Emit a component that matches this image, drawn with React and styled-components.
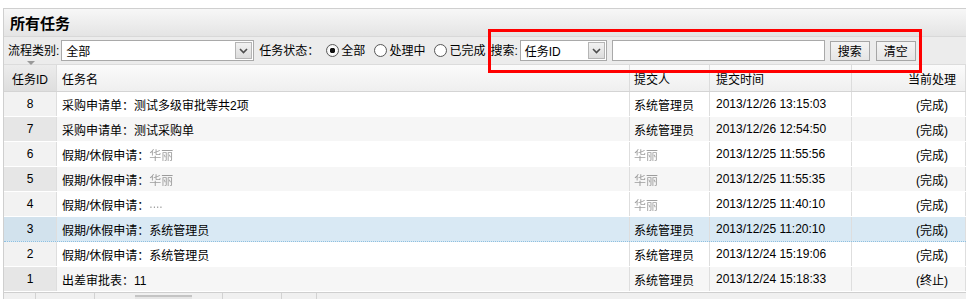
import styled, { createGlobalStyle } from "styled-components";

const GlobalStyle = createGlobalStyle`
  html, body {
    margin: 0;
    padding: 0;
    background: #fff;
    overflow: hidden;
  }
  body {
    font-family: "Liberation Sans", "Noto Sans CJK SC", sans-serif;
    font-size: 12px;
    color: #000;
  }
  * { box-sizing: border-box; }
`;

const rows = [
  { id: 8, name: "采购申请单：测试多级审批等共2项", user: "系统管理员", time: "2013/12/26 13:15:03", state: "(完成)" },
  { id: 7, name: "采购申请单：测试采购单", user: "系统管理员", time: "2013/12/26 12:54:50", state: "(完成)" },
  { id: 6, name: "假期/休假申请：", mask: "华丽", user: null, time: "2013/12/25 11:55:56", state: "(完成)" },
  { id: 5, name: "假期/休假申请：", mask: "华丽", user: null, time: "2013/12/25 11:55:35", state: "(完成)" },
  { id: 4, name: "假期/休假申请：", mask: "....", user: null, time: "2013/12/25 11:40:10", state: "(完成)" },
  { id: 3, name: "假期/休假申请：系统管理员", user: "系统管理员", time: "2013/12/25 11:20:10", state: "(完成)", selected: true },
  { id: 2, name: "假期/休假申请：系统管理员", user: "系统管理员", time: "2013/12/24 15:19:06", state: "(完成)" },
  { id: 1, name: "出差审批表：11", user: "系统管理员", time: "2013/12/24 15:18:33", state: "(终止)" },
];

const App = () => {
  return (
    <>
      <GlobalStyle />
      <Page>
        <Panel>
          <TitleBar>所有任务</TitleBar>
          <Toolbar>
            <Label $ml={4}>流程类别:</Label>
            <Select $w={193} $ml={2}>
              <SelectText>全部</SelectText>
              <SelectArrow><Chevron /></SelectArrow>
            </Select>
            <Label $ml={5}>任务状态：</Label>
            <Radio $checked $ml={7} />
            <Label $ml={2}>全部</Label>
            <Radio $ml={9} />
            <Label $ml={2}>处理中</Label>
            <Radio $ml={9} />
            <Label $ml={2}>已完成</Label>
            <Label $ml={5}>搜索:</Label>
            <Select $w={87} $ml={2}>
              <SelectText>任务ID</SelectText>
              <SelectArrow><Chevron /></SelectArrow>
            </Select>
            <SearchInput />
            <Button $ml={5}>搜索</Button>
            <Button $ml={6}>清空</Button>
          </Toolbar>
          <HeaderRow>
            <HeadCell $center $sorted>
              <SortArrow />
              任务ID
            </HeadCell>
            <HeadCell>任务名</HeadCell>
            <HeadCell $pl={4}>提交人</HeadCell>
            <HeadCell $pl={6}>提交时间</HeadCell>
            <HeadCell $right>当前处理</HeadCell>
          </HeaderRow>
          {rows.map((r, i) => (
            <Row key={r.id} $odd={i % 2 === 1} $selected={r.selected}>
              <IdCell $odd={i % 2 === 1} $selected={r.selected}>{r.id}</IdCell>
              <Cell>
                {r.name}
                {r.mask && <Masked>{r.mask}</Masked>}
              </Cell>
              <Cell $pl={4}>{r.user ? r.user : <Masked>华丽</Masked>}</Cell>
              <Cell $pl={6}>{r.time}</Cell>
              <Cell $right>{r.state}</Cell>
            </Row>
          ))}
          <Pager>
            <PagerGroup $w={32} />
            <PagerGroup $w={59} />
            <PagerGroup $w={128} $pl={40}>
              <PagerBox />
            </PagerGroup>
            <PagerGroup $w={59} />
            <PagerGroup $w={35} />
          </Pager>
          <Highlight />
        </Panel>
      </Page>
    </>
  );
};

const Chevron = () => (
  <svg width="9" height="6" viewBox="0 0 9 6">
    <path d="M1 1 L4.5 4.5 L8 1" fill="none" stroke="#4d4d4d" strokeWidth="1.6" />
  </svg>
);

export default App;

const Page = styled.div`
  padding: 8px 0 0 3px;
`;

const Panel = styled.div`
  position: relative;
  border-top: 1px solid #cfcfcf;
  border-left: 1px solid #cfcfcf;
  width: 963px;
`;

const TitleBar = styled.div`
  height: 28px;
  display: flex;
  align-items: center;
  padding-left: 6px;
  font-size: 15px;
  font-weight: 700;
  background: linear-gradient(#f7f7f7, #e4e4e4);
  border-bottom: 1px solid #d8d8d8;
`;

const Toolbar = styled.div`
  height: 28px;
  display: flex;
  align-items: center;
  background: #ececec;
  border-bottom: 1px solid #dcdcdc;
`;

const Label = styled.span`
  margin-left: ${(p) => p.$ml || 0}px;
  white-space: nowrap;
  line-height: 1;
`;

const Select = styled.div`
  width: ${(p) => p.$w}px;
  height: 21px;
  margin-left: ${(p) => p.$ml || 0}px;
  display: flex;
  align-items: stretch;
  border: 1px solid #a9a9a9;
  background: #fff;
`;

const SelectText = styled.span`
  flex: 1;
  display: flex;
  align-items: center;
  padding-left: 4px;
`;

const SelectArrow = styled.span`
  width: 17px;
  margin: 1px;
  display: flex;
  align-items: center;
  justify-content: center;
  background: linear-gradient(#f2f2f2, #dcdcdc);
  border: 1px solid #b5b5b5;
`;

const Radio = styled.span`
  width: 13px;
  height: 13px;
  margin-left: ${(p) => p.$ml || 0}px;
  border-radius: 50%;
  border: 1px solid #5a5a5a;
  background: radial-gradient(circle, ${(p) => (p.$checked ? "#111 0 2.6px, #fff 3px" : "#fff 0, #fff 60%")}, #e2e2e2);
  flex-shrink: 0;
`;

const SearchInput = styled.div`
  width: 213px;
  height: 21px;
  margin-left: 5px;
  border: 1px solid #a9a9a9;
  background: #fff;
`;

const Button = styled.div`
  width: 40px;
  height: 20px;
  margin-left: ${(p) => p.$ml || 0}px;
  display: flex;
  align-items: center;
  justify-content: center;
  border: 1px solid #a6a6a6;
  background: linear-gradient(#f4f4f4, #e6e6e6);
`;

const grid = `
  display: grid;
  grid-template-columns: 53px 573px 80px 142px 1fr;
`;

const HeaderRow = styled.div`
  ${grid}
  height: 27px;
  background: linear-gradient(#fbfbfb, #efefef);
  border-bottom: 1px solid #d4d4d4;
`;

const HeadCell = styled.div`
  position: relative;
  display: flex;
  align-items: center;
  justify-content: ${(p) => (p.$center ? "center" : p.$right ? "flex-end" : "flex-start")};
  padding: 0 ${(p) => (p.$right ? 9 : 5)}px 0 ${(p) => p.$pl || 5}px;
  border-right: 1px solid #dcdcdc;
  background: ${(p) => (p.$sorted ? "linear-gradient(#ececec, #dedede)" : "transparent")};
`;

const SortArrow = styled.span`
  position: absolute;
  top: -4px;
  left: 23px;
  width: 0;
  height: 0;
  border-left: 4px solid transparent;
  border-right: 4px solid transparent;
  border-top: 4px solid #9a9a9a;
`;

const Row = styled.div`
  ${grid}
  height: 25px;
  background: ${(p) => (p.$selected ? "#d9e9f4" : p.$odd ? "#f6f6f6" : "#fff")};
  border-bottom: 1px ${(p) => (p.$selected ? "dotted #8fc0e0" : "solid #fff")};
`;

const Cell = styled.div`
  display: flex;
  align-items: center;
  justify-content: ${(p) => (p.$right ? "flex-end" : "flex-start")};
  padding: 0 ${(p) => (p.$right ? 17 : 5)}px 0 ${(p) => p.$pl || 5}px;
  border-right: 1px solid #dedede;
  white-space: nowrap;
  overflow: hidden;
`;

const IdCell = styled(Cell)`
  justify-content: center;
  padding: 0;
  background: ${(p) => (p.$selected ? "#d2e2ed" : p.$odd ? "#e6e6e6" : "#f2f2f2")};
`;

const Masked = styled.span`
  color: #777;
  filter: blur(0.7px);
  opacity: 0.7;
`;

const Pager = styled.div`
  display: flex;
  height: 26px;
  border-top: 1px solid #cfcfcf;
  background: #f0f0f0;
`;

const PagerGroup = styled.div`
  width: ${(p) => p.$w}px;
  border-right: 1px solid #d2d2d2;
  display: flex;
  padding-left: ${(p) => p.$pl || 0}px;
`;

const PagerBox = styled.div`
  width: 57px;
  height: 20px;
  margin-top: 2px;
  border-top: 2px solid #c4c4c4;
  background: #e6e6e6;
`;

const Highlight = styled.div`
  position: absolute;
  left: 484px;
  top: 20px;
  width: 434px;
  height: 44px;
  border: 3px solid #ff0000;
  pointer-events: none;
`;
